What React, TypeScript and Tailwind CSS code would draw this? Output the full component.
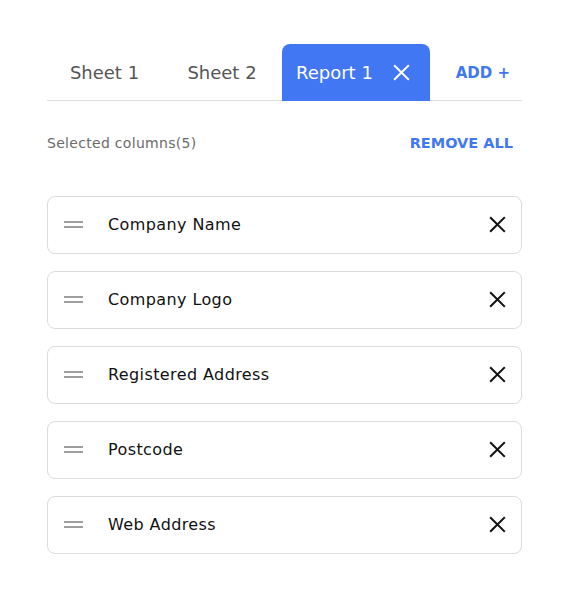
import { useState } from "react";

const FONT = { fontFamily: '"DejaVu Sans", "Open Sans", sans-serif' };

function XIcon({ className = "" }: { className?: string }) {
  return (
    <svg viewBox="0 0 18 18" className={className} fill="none" stroke="currentColor" strokeWidth={2.2} strokeLinecap="square">
      <path d="M2 2L16 16M16 2L2 16" />
    </svg>
  );
}

function Handle() {
  return (
    <div className="flex w-[19px] flex-col gap-[3px]">
      <span className="h-[2px] w-full bg-[#9e9e9e]" />
      <span className="h-[2px] w-full bg-[#9e9e9e]" />
    </div>
  );
}

const initial = ["Company Name", "Company Logo", "Registered Address", "Postcode", "Web Address"];

export default function App() {
  const [cols, setCols] = useState(initial);

  return (
    <div className="min-h-[600px] w-[576px] bg-white pl-[47px] pr-[54px] pt-[44px]" style={FONT}>
      <div className="flex h-[57px] items-stretch border-b border-[#dedede]">
        <button className="flex w-[115px] items-center justify-center text-[18px] text-[#555]">
          Sheet 1
        </button>
        <button className="flex w-[120px] items-center justify-center text-[18px] text-[#555]">
          Sheet 2
        </button>
        <div className="-mb-px flex w-[148px] items-center justify-between rounded-t-[8px] bg-[#4277f4] pl-[14px] pr-[20px] text-[18px] text-white">
          <span>Report 1</span>
          <XIcon className="h-[17px] w-[17px]" />
        </div>
        <button className="ml-auto flex items-center pr-[12px] pt-[2px] text-[15px] font-bold text-[#4277f4]">
          ADD +
        </button>
      </div>

      <div className="mt-[32px] flex items-center justify-between">
        <span className="text-[14px] tracking-[0.3px] text-[#6b6b6b]">Selected columns({cols.length})</span>
        <button
          onClick={() => setCols([])}
          className="pr-[9px] text-[14.5px] font-bold text-[#4277f4]"
        >
          REMOVE ALL
        </button>
      </div>

      <ul className="mt-[41px] flex flex-col gap-[17px]">
        {cols.map((c) => (
          <li
            key={c}
            className="flex h-[58px] items-center rounded-[8px] border border-[#dcdcdc] pl-[16px] pr-[15px]"
          >
            <Handle />
            <span className="ml-[25px] text-[16px] tracking-[0.4px] text-[#111]">{c}</span>
            <button
              onClick={() => setCols(cols.filter((x) => x !== c))}
              className="ml-auto text-[#111]"
            >
              <XIcon className="h-[17px] w-[17px]" />
            </button>
          </li>
        ))}
      </ul>
    </div>
  );
}
